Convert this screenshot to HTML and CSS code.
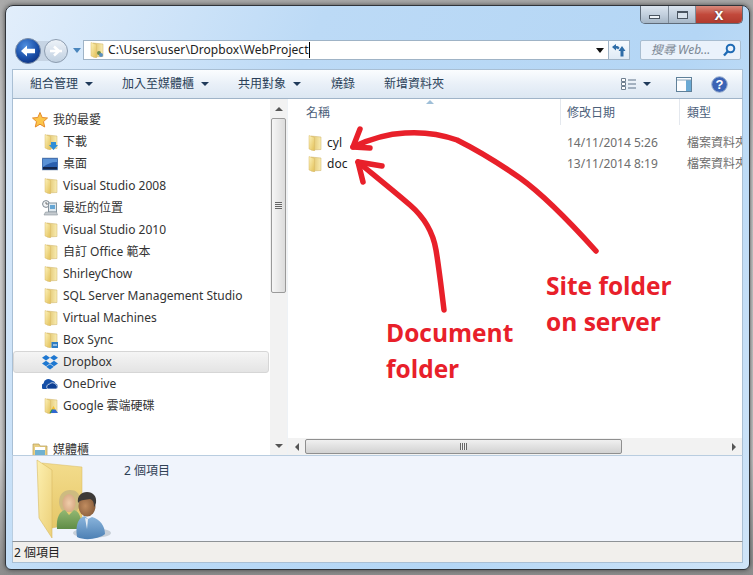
FILE: index.html
```html
<!DOCTYPE html>
<html lang="zh-Hant">
<head>
<meta charset="utf-8">
<title>WebProject</title>
<link rel="stylesheet" href="styles.css">
</head>
<body>
<svg class="defs" width="0" height="0">
  <defs>
    <linearGradient id="flap" x1="0" y1="0" x2="1" y2="1"><stop offset="0" stop-color="#fdf3bd"/><stop offset="1" stop-color="#e2bf55"/></linearGradient>
    <linearGradient id="backp" x1="0" y1="0" x2="1" y2="0"><stop offset="0" stop-color="#dcbc60"/><stop offset="1" stop-color="#f9edb4"/></linearGradient>
    <linearGradient id="bigflap" x1="0" y1="0" x2="1" y2="1"><stop offset="0" stop-color="#fdf0b0"/><stop offset="1" stop-color="#ecd079"/></linearGradient>
    <linearGradient id="bigback" x1="0" y1="0" x2="0" y2="1"><stop offset="0" stop-color="#f3dc8c"/><stop offset="1" stop-color="#e6c768"/></linearGradient>
    <radialGradient id="backball" cx=".4" cy=".3" r=".8"><stop offset="0" stop-color="#4f8fe0"/><stop offset=".6" stop-color="#1a4fa8"/><stop offset="1" stop-color="#0b2a78"/></radialGradient>
    <linearGradient id="fwdball" x1="0" y1="0" x2="0" y2="1"><stop offset="0" stop-color="#eef3f9"/><stop offset="1" stop-color="#bfcfe0"/></linearGradient>
    <linearGradient id="manbody" x1="0" y1="0" x2="0" y2="1"><stop offset="0" stop-color="#8cb6dd"/><stop offset="1" stop-color="#4d80b4"/></linearGradient>
    <linearGradient id="wombody" x1="0" y1="0" x2="0" y2="1"><stop offset="0" stop-color="#93b873"/><stop offset="1" stop-color="#5f8c46"/></linearGradient>
    <radialGradient id="manface" cx=".4" cy=".5" r=".7"><stop offset="0" stop-color="#c18c5f"/><stop offset="1" stop-color="#7e5535"/></radialGradient>
    <radialGradient id="womface" cx=".5" cy=".5" r=".7"><stop offset="0" stop-color="#f0cdaa"/><stop offset="1" stop-color="#cf9e78"/></radialGradient>
    <symbol id="folder" viewBox="0 0 16 16">
      <path d="M5 1 15 2V14.500L5 15z" fill="url(#backp)" stroke="#cdb064" stroke-width=".5"/>
      <path d="M3 .500 8.500 2.500V16L3 14z" fill="url(#flap)" stroke="#d8bb6a" stroke-width=".5"/>
    </symbol>
  </defs>
</svg>
<div class="window">
  <div class="caption">
    <div class="capbtns">
      <span class="capbtn min"><i class="minbar"></i></span>
      <span class="capbtn max"><i class="maxbox"></i></span>
      <span class="capbtn close">x</span>
    </div>
  </div>
  <div class="addrrow">
    <svg class="navballs" width="70" height="28" viewBox="0 0 70 28">
      <rect x="14" y="5" width="30" height="20" fill="#c6d4e4"/>
      <circle cx="43" cy="15" r="11.500" fill="url(#fwdball)" stroke="#8d9db0"/>
      <path d="M37 15h8M41 10.500l5 4.500-5 4.500M49 15h-4" fill="none" stroke="#fff" stroke-width="2.500"/>
      <circle cx="15" cy="15" r="12.500" fill="url(#backball)" stroke="#7b8ea8"/>
      <path d="M8 15l6-5.500v3.300h8v4.400h-8v3.300z" fill="#fff"/>
      <path d="M60 12h8l-4 5z" fill="#4a86bd"/>
    </svg>
    <div class="addrbar">
      <svg class="addricon" width="16" height="16"><use href="#folder"/><circle cx="11" cy="11" r="2" fill="#6a8a4a"/><circle cx="13" cy="13" r="2" fill="#5a8fc0"/></svg>
      <span class="addrtext">C:\Users\user\Dropbox\WebProject</span><i class="caret"></i>
      <i class="addrdrop"></i>
    </div>
    <div class="refresh">
      <svg width="16" height="14" viewBox="0 0 16 14"><path d="M1 4l4-3v2c2 0 3 .5 3.500 2L7 6.500C6.500 5.800 6 5.500 5 5.500V7.500z" fill="#2f6da8"/><path d="M12 2l3.500 5h-2v5.500h-3V7h-2z" fill="#2f6da8" transform="translate(-1 1)"/></svg>
    </div>
    <div class="search">
      <span class="searchtext">搜尋 Web...</span>
      <svg width="14" height="14" viewBox="0 0 14 14"><circle cx="8.500" cy="5.500" r="3.800" fill="none" stroke="#1f6bb5" stroke-width="2"/><path d="M5.800 8.300 2 12.500" stroke="#1f6bb5" stroke-width="2.400"/></svg>
    </div>
  </div>
  <div class="content">
    <div class="toolbar">
      <span class="tool t1">組合管理<i class="darr"></i></span>
      <span class="tool t2">加入至媒體櫃<i class="darr"></i></span>
      <span class="tool t3">共用對象<i class="darr"></i></span>
      <span class="tool t4">燒錄</span>
      <span class="tool t5">新增資料夾</span>
      <span class="toolright">
        <svg class="viewicon" width="15" height="12" viewBox="0 0 15 12"><path d="M.500.500h4v3h-4zM.500 4.500h4v3h-4zM.500 8.500h4v3h-4z" fill="#fff" stroke="#6f7f90"/><path d="M7 2h8M7 6h8M7 10h8" stroke="#5f7388"/></svg>
        <i class="darr viewarr"></i>
        <svg class="paneicon" width="16" height="15" viewBox="0 0 16 15"><rect x=".5" y=".5" width="15" height="14" fill="#fbfdff" stroke="#5f8099"/><rect x="10" y="3" width="5" height="11" fill="#69a9d4"/><path d="M1 3h14" stroke="#8aa5ba"/></svg>
        <svg class="helpicon" width="17" height="17" viewBox="0 0 17 17"><circle cx="8.500" cy="8.500" r="7.800" fill="#3a63b5" stroke="#9db2cf"/><text x="8.500" y="13" text-anchor="middle" class="helpq">?</text></svg>
      </span>
    </div>
    <div class="main">
      <div class="nav">
        <div class="navrow head"><svg width="16" height="16" viewBox="0 0 16 16"><path d="M8 .500l2.200 5 5.300.500-4 3.600 1.200 5.400L8 12.200 3.300 15l1.200-5.400-4-3.600 5.300-.500z" fill="#fcc64a" stroke="#e58a2a"/></svg>我的最愛</div>
        <div class="navrow"><svg width="16" height="16" viewBox="0 0 16 16"><use href="#folder"/><path d="M9 8h5v3h2l-4.500 5L7 11h2z" fill="#2f8ed8"/></svg>下載</div>
        <div class="navrow"><svg width="16" height="16" viewBox="0 0 16 16"><rect x="0" y="2" width="16" height="12" fill="#2a5fae" stroke="#8da2b8" stroke-width=".6"/><path d="M1 11h14v2.500H1z" fill="#14264a"/><path d="M1 3h14v3C9 6 5 8 1 11z" fill="#5a92d6"/></svg>桌面</div>
        <div class="navrow"><svg width="16" height="16"><use href="#folder"/></svg>Visual Studio 2008</div>
        <div class="navrow"><svg width="16" height="16" viewBox="0 0 16 16"><circle cx="4" cy="4" r="3.400" fill="#f2f4f6" stroke="#7d8790"/><path d="M4 2v2h2" stroke="#555" fill="none" stroke-width=".8"/><rect x="6.500" y="3" width="8" height="9" fill="#dfe8ee" stroke="#86949e"/><rect x="8" y="5" width="5" height="4" fill="#66a6d4"/><path d="M2 15l1.500-3h11l1 3z" fill="#c5cbd0" stroke="#8b959c" stroke-width=".6"/></svg>最近的位置</div>
        <div class="navrow"><svg width="16" height="16"><use href="#folder"/></svg>Visual Studio 2010</div>
        <div class="navrow"><svg width="16" height="16"><use href="#folder"/></svg>自訂 Office 範本</div>
        <div class="navrow"><svg width="16" height="16"><use href="#folder"/></svg>ShirleyChow</div>
        <div class="navrow"><svg width="16" height="16"><use href="#folder"/></svg>SQL Server Management Studio</div>
        <div class="navrow"><svg width="16" height="16"><use href="#folder"/></svg>Virtual Machines</div>
        <div class="navrow"><svg width="16" height="16" viewBox="0 0 16 16"><use href="#folder"/><rect x="9.500" y="10" width="6.500" height="6" fill="#2d7cc4"/><path d="M11 13h4" stroke="#fff"/></svg>Box Sync</div>
        <div class="navrow selected"><svg width="16" height="16" viewBox="0 0 16 16"><path d="M4 1 8 3.700 4 6.400 0 3.700zM12 1l4 2.700-4 2.700-4-2.700zM4 6.800l4 2.700-4 2.700-4-2.700zM12 6.800l4 2.700-4 2.700-4-2.700zM4.200 12.800 8 10.200l3.800 2.600L8 15.500z" fill="#1f78d1"/></svg>Dropbox</div>
        <div class="navrow"><svg width="16" height="16" viewBox="0 0 16 16"><path d="M1 13a3 3 0 0 1 .5-5.500A5 5 0 0 1 10 4.500a4 4 0 0 1 3.500 3 3 3 0 0 1 .8 5.500z" fill="#1550a8"/><path d="M5.500 13a3 3 0 0 1 2-5 4 4 0 0 1 6 .2 3 3 0 0 1 1 4.800z" fill="#0d3f94" stroke="#fff" stroke-width=".7"/></svg>OneDrive</div>
        <div class="navrow"><svg width="16" height="16" viewBox="0 0 16 16"><use href="#folder"/><path d="M11.500 8l2 3.500h-4z" fill="#f6c02c"/><path d="M9.500 11.500 7.500 15l2-.1 2-3.400z" fill="#2b9a48"/><path d="M9 15h7l-2.500-3.500h-3z" fill="#2f66d0"/></svg>Google 雲端硬碟</div>
        <div class="navrow head library"><svg width="16" height="16" viewBox="0 0 16 16"><path d="M1 2h6l1 2h7v12H1z" fill="#e9cf84" stroke="#b59b56" stroke-width=".7"/><path d="M3 5h10v3H3z" fill="#fff"/><rect x="3" y="8" width="10" height="7" fill="#6fb0cf"/></svg>媒體櫃</div>
      </div>
      <div class="vbar">
        <div class="sbbtn"><i class="up"></i></div>
        <div class="vthumb"><i class="grip"></i></div>
        <div class="vtrack"></div>
        <div class="sbbtn low"><i class="down"></i></div>
      </div>
      <div class="files">
        <div class="headers">
          <span class="colname">名稱<i class="sortarr"></i></span>
          <span class="coldate">修改日期</span>
          <span class="coltype">類型</span>
        </div>
        <div class="list">
          <div class="filerow"><span class="fname"><svg width="16" height="16"><use href="#folder"/></svg>cyl</span><span class="fdate">14/11/2014 5:26</span><span class="ftype">檔案資料夾</span></div>
          <div class="filerow"><span class="fname"><svg width="16" height="16"><use href="#folder"/></svg>doc</span><span class="fdate">13/11/2014 8:19</span><span class="ftype">檔案資料夾</span></div>
        </div>
        <div class="hbar">
          <div class="hbtn"><i class="left"></i></div>
          <div class="hthumb"><i class="hgrip"></i></div>
          <div class="htrack"></div>
          <div class="hbtn"><i class="right"></i></div>
        </div>
      </div>
    </div>
    <div class="details">
      <svg class="bigfolder" width="80" height="86" viewBox="0 0 80 86">
        <path d="M10 7 50 11V66L20 72z" fill="url(#bigback)" stroke="#d9bb62" stroke-width=".5"/>
        <path d="M5 4 20 14V60L20 82 7 62z" fill="url(#bigflap)" stroke="#d9bb62" stroke-width=".6"/>
        <ellipse cx="60" cy="77" rx="19" ry="5" fill="#aab2bc" opacity=".55"/>
        <path d="M27 46c0-8 5-12 11-12s10 3 10 10c0 6-2 10-4 12H31c-2-3-4-6-4-10z" fill="#cdbb80"/>
        <ellipse cx="37" cy="47" rx="6.500" ry="9" fill="url(#womface)"/>
        <path d="M25 73c-1-12 3-18 8-19l4 5 5-5c5 1 8 8 8 19z" fill="url(#wombody)"/>
        <ellipse cx="55" cy="50" rx="8.500" ry="10.500" fill="url(#manface)"/>
        <path d="M46 47c-1-7 3-11 9-11s10 4 9 11c-1 2-1 3-2 4 0-5-1-7-4-8-4 1-9 0-12 4z" fill="#3d3a38"/>
        <path d="M45 81c-2-13 2-20 8-21l3 3 4-2c8 2 13 9 13 17-6 5-20 7-28 3z" fill="url(#manbody)"/>
        <path d="M53 62l3 1-1 10z" fill="#e8eef4"/>
      </svg>
      <span class="count">2 個項目</span>
    </div>
    <div class="status">2 個項目</div>
  </div>
</div>
<svg class="arrows" width="753" height="575" viewBox="0 0 753 575">
  <g fill="none" stroke="#e8202a" stroke-width="5.500" stroke-linecap="round" stroke-linejoin="round">
    <path d="M596 251C578 231 548 198 520 178 497 162 475 149 457 140 440 134 420 132 405 133 385 134 370 139 353 147"/>
    <path d="M360 129 353 147 370 148"/>
    <path d="M444 310C441 285 438 262 436 250 433 232 425 218 410 205 390 188 375 176 358 162"/>
    <path d="M382 166 358 162 363 182"/>
  </g>
</svg>
<div class="note notesite">Site folder<br>on server</div>
<div class="note notedoc">Document<br>folder</div>
</body>
</html>
```
FILE: styles.css
```css
* { box-sizing: border-box; }
html, body { margin: 0; height: 575px; overflow: hidden; }
body {
  position: relative;
  background: linear-gradient(#a9a9a9, #cfcfcf 30%, #c8c8c8 80%, #8c8c8c);
  font: 12px/16px "Noto Sans", "Noto Sans CJK TC", sans-serif;
  color: #2b2b2b;
}
i { display: block; font-style: normal; }
svg { display: block; flex: none; }
.defs { position: absolute; }

.window {
  display: flex;
  flex-direction: column;
  width: 745px;
  height: 565px;
  margin-left: 5px;
  position: relative;
  top: 5px;
  padding: 0 6px 6px;
  border: 1px solid #30343a;
  border-radius: 8px 8px 6px 6px;
  background: linear-gradient(115deg, #e2eefb 0, #bcdaf6 32%, #b4d6f5 70%, #cfe4f8 100%);
  box-shadow: 0 0 5px #444;
}
.caption { display: flex; justify-content: flex-end; height: 18px; }
.capbtns {
  display: flex;
  height: 18px;
  border: 1px solid #5f6b79;
  border-top: 0;
  border-radius: 0 0 5px 5px;
  overflow: hidden;
}
.capbtn { display: flex; align-items: center; justify-content: center; }
.min, .max { width: 28px; background: linear-gradient(#dbe5ef, #c3d0de 50%, #a6b6c6); border-right: 1px solid #7d8a98; }
.max { width: 27px; }
.close {
  width: 46px;
  background: linear-gradient(#d98a7c, #c2493b 50%, #b13a2e);
  color: #fff;
  font: bold 16px/16px "Liberation Sans", sans-serif;
  text-shadow: 0 0 2px #333;
}
.minbar { width: 11px; height: 4px; margin-top: 5px; border: 1px solid #4a5561; background: #eef3f8; }
.maxbox { width: 11px; height: 8px; border: 1px solid #4a5561; border-top-width: 2px; background: #d8e2ec; }

.addrrow { display: flex; align-items: center; height: 28px; margin: 12px 0 5px; }
.navballs { margin-left: 1px; margin-right: 0; }
.addrbar {
  display: flex;
  align-items: center;
  width: 525px;
  height: 20px;
  background: #fff;
  border: 1px solid #9fb3c6;
  border-right: 0;
  padding-left: 4px;
}
.addricon { margin-right: 4px; }
.addrtext { white-space: nowrap; color: #222; letter-spacing: .06px; }
.caret { width: 1px; height: 16px; background: #000; }
.addrdrop {
  margin-left: auto;
  margin-right: 4px;
  border: 4px solid transparent;
  border-top: 5px solid #111;
  border-bottom: 0;
}
.refresh {
  display: flex;
  align-items: center;
  justify-content: center;
  width: 22px;
  height: 20px;
  background: linear-gradient(#f7fbff, #dfeaf5);
  border: 1px solid #9fb3c6;
}
.search {
  display: flex;
  align-items: center;
  justify-content: space-between;
  width: 101px;
  height: 20px;
  margin-left: 10px;
  padding: 0 4px 0 10px;
  background: #eaf2fb;
  border: 1px solid #a8bdd0;
  border-radius: 2px;
}
.searchtext { font-style: italic; color: #7c8894; white-space: nowrap; }

.content { display: flex; flex-direction: column; flex: 1; min-height: 0; background: #fff; }
.toolbar {
  display: flex;
  align-items: center;
  height: 30px;
  background: linear-gradient(#fbfdff, #e9f0f8 50%, #dce7f2);
  border: 1px solid #a9bfd4;
  border-bottom: 1px solid #a0b4c8;
  color: #2a3f58;
  flex: none;
}
.tool { display: flex; align-items: center; white-space: nowrap; }
.t1 { margin-left: 17px; }
.t2 { margin-left: 29px; }
.t3 { margin-left: 29px; }
.t4 { margin-left: 30px; }
.t5 { margin-left: 29px; }
.darr {
  margin-left: 7px;
  border: 4px solid transparent;
  border-top: 4px solid #1f3a5a;
  border-bottom: 0;
}
.toolright { display: flex; align-items: center; margin-left: auto; margin-right: 14px; }
.viewarr { margin-left: 7px; }
.paneicon { margin-left: 25px; }
.helpicon { margin-left: 19px; }
.helpq { font: bold 13px "Liberation Sans", sans-serif; fill: #fff; }

.main { display: flex; flex: 1; min-height: 0; height: 356px; }
.nav {
  width: 258px;
  padding-top: 10px;
  overflow: hidden;
  flex: none;
  border-left: 1px solid #a9bfd4;
}
.navrow {
  display: flex;
  align-items: center;
  gap: 5px;
  height: 22px;
  padding-left: 29px;
  color: #333;
  white-space: nowrap;
}
.navrow.head { padding-left: 19px; }
.library { margin-top: 22px; }
.selected {
  height: 22px;
  background: linear-gradient(#f5f5f5, #e4e4e4);
  border: 1px solid #d6d6d6;
  border-radius: 3px;
  padding-left: 28px;
  margin-right: 1px;
}
.vbar { display: flex; flex-direction: column; width: 17px; flex: none; background: #f2f2f2; }
.sbbtn { display: flex; align-items: center; justify-content: center; height: 19px; flex: none; }
.low { height: 18px; }
.up { border: 4px solid transparent; border-bottom: 4px solid #555; border-top: 0; }
.down { border: 4px solid transparent; border-top: 4px solid #555; border-bottom: 0; }
.vthumb {
  display: flex;
  align-items: center;
  justify-content: center;
  height: 175px;
  margin: 0 1px;
  background: linear-gradient(90deg, #f6f6f6, #dcdcdc);
  border: 1px solid #9a9a9a;
  border-radius: 2px;
}
.grip { width: 7px; height: 7px; background: repeating-linear-gradient(#666 0 1px, #eee 1px 2px); }
.vtrack { flex: 1; }

.files { display: flex; flex-direction: column; flex: 1; min-width: 0; border-left: 1px solid #eef2f6; border-right: 1px solid #a9bfd4; }
.headers, .filerow { display: grid; grid-template-columns: 272px 119px 1fr; }
.headers { height: 26px; color: #4c607a; flex: none; }
.colname { position: relative; padding: 6px 0 0 18px; }
.sortarr {
  position: absolute;
  left: 138px;
  top: 1px;
  border: 4px solid transparent;
  border-bottom: 4px solid #9fbfd8;
  border-top: 0;
}
.coldate, .coltype { padding: 6px 0 0 6px; height: 26px; border-left: 1px solid #e4e8ee; }
.coltype { padding-left: 7px; }
.list { flex: 1; padding-top: 8px; min-height: 0; }
.filerow { height: 20.500px; align-items: center; color: #6d6d6d; white-space: nowrap; overflow: hidden; }
.fname { display: flex; align-items: center; gap: 5px; padding-left: 18px; color: #222; }
.fdate { padding-left: 7px; }
.ftype { padding-left: 8px; }
.hbar { display: flex; height: 17px; flex: none; background: #f2f2f2; }
.hbtn { display: flex; align-items: center; justify-content: center; width: 17px; flex: none; }
.left { border: 4px solid transparent; border-right: 4px solid #555; border-left: 0; }
.right { border: 4px solid transparent; border-left: 4px solid #555; border-right: 0; }
.hthumb {
  display: flex;
  align-items: center;
  justify-content: center;
  width: 317px;
  margin: 1px 0;
  background: linear-gradient(#f0f0f0, #d2d2d2);
  border: 1px solid #8f8f8f;
  border-radius: 2px;
}
.hgrip { width: 7px; height: 7px; background: repeating-linear-gradient(90deg, #666 0 1px, #eee 1px 2px); }
.htrack { flex: 1; }

.details {
  display: flex;
  height: 86px;
  flex: none;
  background: #f0f4fc;
  border: 1px solid #b9cde0;
  border-bottom: 0;
  border-right-color: #a9bfd4;
}
.bigfolder { margin-left: 19px; }
.count { margin: 7px 0 0 12px; color: #2f4055; }
.status {
  height: 22px;
  flex: none;
  line-height: 21px;
  padding-left: 1px;
  background: #f1efec;
  border: 1px solid #a9bfd4;
  border-top: 1px solid #8e9296;
  color: #222;
}

.arrows { position: absolute; left: 0; top: 0; pointer-events: none; }
.note {
  position: absolute;
  font: bold 24.500px/36px "Open Sans", sans-serif;
  color: #e8202a;
  white-space: nowrap;
}
.notesite { left: 546px; top: 268px; }
.notedoc { left: 386px; top: 315px; }
```
